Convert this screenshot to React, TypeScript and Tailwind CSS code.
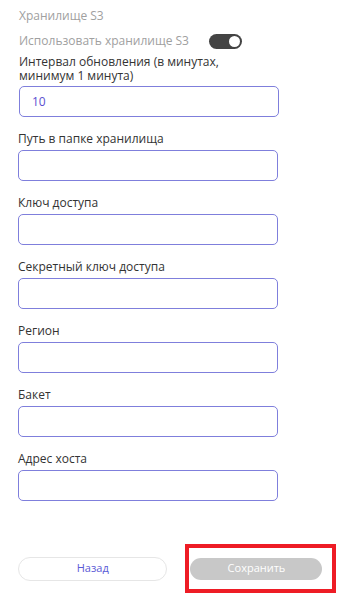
import { useState } from "react";

const fields = [
  { label: "Путь в папке хранилища", value: "" },
  { label: "Ключ доступа", value: "" },
  { label: "Секретный ключ доступа", value: "" },
  { label: "Регион", value: "" },
  { label: "Бакет", value: "" },
  { label: "Адрес хоста", value: "" },
];

function Field({ label, value, twoLine }: { label: React.ReactNode; value: string; twoLine?: boolean }) {
  return (
    <div className="flex flex-col">
      <label className={`text-[12px] text-[#333333] ${twoLine ? "leading-[14px] mb-[3px]" : "leading-[16px] mb-[3px]"}`}>
        {label}
      </label>
      <input
        defaultValue={value}
        className="w-[260px] h-[31px] rounded-[5px] border border-[#7f7fdc] px-[12px] text-[12px] text-[#5b4fd0] outline-none bg-white"
      />
    </div>
  );
}

export default function App() {
  const [enabled, setEnabled] = useState(true);

  return (
    <div className="w-[354px] h-[599px] bg-white flex flex-col font-['Open_Sans',sans-serif] px-[18px]">
      <div className="pt-[7px] text-[12px] leading-[18px] text-[#a0a0a0] pl-[1px]">Хранилище S3</div>
      <div className="flex items-center mt-[7px] h-[18px] pl-[1px]">
        <span className="text-[12px] text-[#a0a0a0] w-[190px]">Использовать хранилище S3</span>
        <button
          onClick={() => setEnabled(!enabled)}
          className={`w-[33px] h-[15px] rounded-full flex items-center px-[2px] ${enabled ? "bg-[#444444] justify-end" : "bg-[#cccccc] justify-start"}`}
        >
          <span className="w-[11px] h-[11px] rounded-full bg-white" />
        </button>
      </div>
      <div className="mt-[5px] pl-[1px]">
        <Field
          twoLine
          label={
            <>
              Интервал обновления (в минутах,
              <br />
              минимум 1 минута)
            </>
          }
          value="10"
        />
      </div>
      <div className="flex flex-col gap-[14px] mt-[14px]">
        {fields.map((f) => (
          <Field key={f.label} label={f.label} value={f.value} />
        ))}
      </div>
      <div className="flex items-center mt-auto mb-[6px]">
        <button className="w-[150px] h-[24px] rounded-full border border-[#e6e6e6] bg-white text-[11px] text-[#5a5ad6]">
          Назад
        </button>
        <div className="ml-[18px] border-[4px] border-[#ee1c25] w-[151px] h-[49px] flex items-center justify-start pl-[1px]">
          <button className="w-[132px] h-[22px] rounded-full bg-[#c8c8c8] text-[11px] text-white">
            Сохранить
          </button>
        </div>
      </div>
    </div>
  );
}
